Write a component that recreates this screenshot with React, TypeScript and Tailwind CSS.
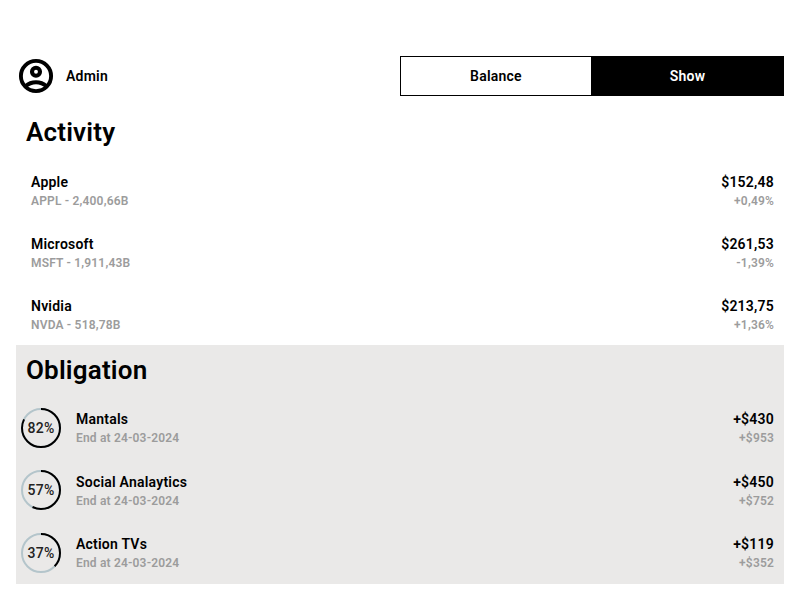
import React from "react";

type Stock = { name: string; detail: string; price: string; change: string };
type Goal = { percent: number; name: string; detail: string; price: string; change: string };

const stocks: Stock[] = [
  { name: "Apple", detail: "APPL - 2,400,66B", price: "$152,48", change: "+0,49%" },
  { name: "Microsoft", detail: "MSFT - 1,911,43B", price: "$261,53", change: "-1,39%" },
  { name: "Nvidia", detail: "NVDA - 518,78B", price: "$213,75", change: "+1,36%" },
];

const goals: Goal[] = [
  { percent: 82, name: "Mantals", detail: "End at 24-03-2024", price: "+$430", change: "+$953" },
  { percent: 57, name: "Social Analaytics", detail: "End at 24-03-2024", price: "+$450", change: "+$752" },
  { percent: 37, name: "Action TVs", detail: "End at 24-03-2024", price: "+$119", change: "+$352" },
];

function AccountIcon() {
  return (
    <svg viewBox="0 0 40 40" className="h-10 w-10" fill="none" stroke="currentColor">
      <circle cx="20" cy="20" r="15.1" strokeWidth="3.9" />
      <circle cx="20" cy="15.8" r="4" strokeWidth="4.1" />
      <path d="M9.500 30.200C12.400 27.600 16 26.200 20 26.200s7.600 1.400 10.500 4" strokeWidth="3.900" />
    </svg>
  );
}

function Pair({ top, bottom, right = false }: { top: string; bottom: string; right?: boolean }) {
  return (
    <div className={right ? "text-right" : ""}>
      <p className="text-[14px] leading-[21px] font-semibold tracking-[0.22px] text-black">{top}</p>
      <p className="text-[12px] leading-[16px] font-semibold tracking-[0.18px] text-[#9c9c9c]">{bottom}</p>
    </div>
  );
}

function Ring({ percent }: { percent: number }) {
  const length = 2 * Math.PI * 19;
  return (
    <div className="relative h-10 w-10">
      <svg viewBox="0 0 40 40" className="h-10 w-10 -rotate-90" fill="none" strokeWidth="2">
        <circle cx="20" cy="20" r="19" stroke="#b4c5cb" />
        <circle cx="20" cy="20" r="19" stroke="#000" strokeDasharray={`${(length * percent) / 100} ${length}`} />
      </svg>
      <span className="absolute inset-0 flex items-center justify-center pt-px text-[14px] font-medium tracking-[0.2px] text-[#222]">
        {percent}%
      </span>
    </div>
  );
}

export default function App() {
  return (
    <div className="h-[600px] w-[800px] bg-white px-4 pt-14 font-['Roboto',sans-serif] text-black">
      <header className="flex h-10 items-center">
        <AccountIcon />
        <span className="ml-2.5 flex-1 text-[14px] font-semibold tracking-[0.22px]">Admin</span>
        <div className="flex h-10 w-96 border border-black text-[14px] font-semibold tracking-[0.22px]">
          <button className="w-[190px]">Balance</button>
          <button className="flex-1 bg-black pl-px text-white">Show</button>
        </div>
      </header>
      <section className="h-[249px] pt-5">
        <h2 className="pl-2.5 text-[26px] leading-8 font-semibold tracking-[0.18px]">Activity</h2>
        <div className="mt-6">
          {stocks.map((s) => (
            <div key={s.name} className="flex h-[62px] justify-between pr-2.5 pl-[15px]">
              <Pair top={s.name} bottom={s.detail} />
              <Pair right top={s.price} bottom={s.change} />
            </div>
          ))}
        </div>
      </section>
      <section className="h-[239px] bg-[#eae9e8] pt-[9px]">
        <h2 className="pl-2.5 text-[26px] leading-8 font-semibold tracking-[0.18px]">Obligation</h2>
        <div className="mt-[21px]">
          {goals.map((g) => (
            <div key={g.name} className="flex h-[62.5px] items-start pr-2.5 pl-[5px]">
              <div className="pt-[0.7px]">
                <Ring percent={g.percent} />
              </div>
              <div className="ml-[15px] flex flex-1 justify-between pt-[2px]">
                <Pair top={g.name} bottom={g.detail} />
                <Pair right top={g.price} bottom={g.change} />
              </div>
            </div>
          ))}
        </div>
      </section>
    </div>
  );
}
